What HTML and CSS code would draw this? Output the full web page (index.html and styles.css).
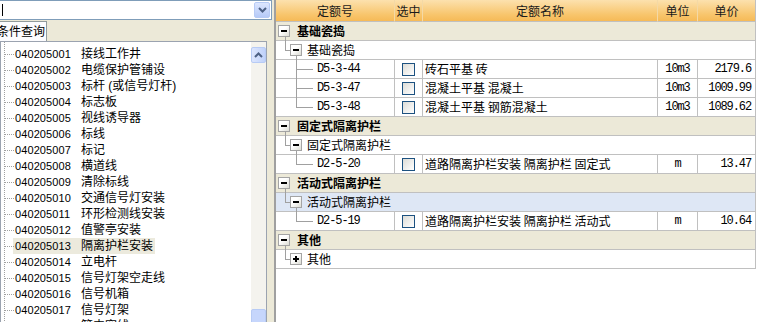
FILE: index.html
```html
<!DOCTYPE html>
<html lang="zh-CN">

<head>
    <meta charset="UTF-8">
    <title>定额查询</title>
    <link rel="stylesheet" href="styles.css">
</head>

<body>
    <div class="side">
        <div class="combo">
            <span class="caret"></span>
            <span class="combo-btn">
                <svg width="9" height="6" viewBox="0 0 9 6"><path d="M1 1 L4.5 4.5 L8 1" fill="none" stroke="#4D6185" stroke-width="2"/></svg>
            </span>
        </div>
        <div class="tabs">
            <div class="tab">条件查询</div>
        </div>
        <div class="tree">
            <div class="list">
                <div class="row"><span class="label"><span class="code">040205001</span>接线工作井</span></div>
                <div class="row"><span class="label"><span class="code">040205002</span>电缆保护管铺设</span></div>
                <div class="row"><span class="label"><span class="code">040205003</span>标杆 (或信号灯杆)</span></div>
                <div class="row"><span class="label"><span class="code">040205004</span>标志板</span></div>
                <div class="row"><span class="label"><span class="code">040205005</span>视线诱导器</span></div>
                <div class="row"><span class="label"><span class="code">040205006</span>标线</span></div>
                <div class="row"><span class="label"><span class="code">040205007</span>标记</span></div>
                <div class="row"><span class="label"><span class="code">040205008</span>横道线</span></div>
                <div class="row"><span class="label"><span class="code">040205009</span>清除标线</span></div>
                <div class="row"><span class="label"><span class="code">040205010</span>交通信号灯安装</span></div>
                <div class="row"><span class="label"><span class="code">040205011</span>环形检测线安装</span></div>
                <div class="row"><span class="label"><span class="code">040205012</span>值警亭安装</span></div>
                <div class="row on"><span class="label"><span class="code">040205013</span>隔离护栏安装</span></div>
                <div class="row"><span class="label"><span class="code">040205014</span>立电杆</span></div>
                <div class="row"><span class="label"><span class="code">040205015</span>信号灯架空走线</span></div>
                <div class="row"><span class="label"><span class="code">040205016</span>信号机箱</span></div>
                <div class="row"><span class="label"><span class="code">040205017</span>信号灯架</span></div>
                <div class="row"><span class="label"><span class="code">040205018</span>管内穿线</span></div>
            </div>
            <div class="scroll">
                <div class="scroll-btn">
                    <svg width="9" height="6" viewBox="0 0 9 6"><path d="M1 5 L4.5 1.5 L8 5" fill="none" stroke="#4D6185" stroke-width="2"/></svg>
                </div>
                <div class="thumb"></div>
            </div>
        </div>
    </div>

    <div class="main">
        <table class="grid">
            <colgroup>
                <col class="c-code">
                <col class="c-chk">
                <col class="c-name">
                <col class="c-unit">
                <col class="c-price">
            </colgroup>
            <thead>
                <tr>
                    <th>定额号</th>
                    <th>选中</th>
                    <th>定额名称</th>
                    <th>单位</th>
                    <th>单价</th>
                </tr>
            </thead>
            <tbody>
                <tr class="grp">
                    <td colspan="5"><div class="node lv0"><i class="box"></i>基础瓷捣</div></td>
                </tr>
                <tr>
                    <td colspan="5"><div class="node lv1"><i class="box"></i>基础瓷捣</div></td>
                </tr>
                <tr>
                    <td><div class="node lv2 mid"><span class="mono">D5-3-44</span></div></td>
                    <td><i class="chk"></i></td>
                    <td class="name">砖石平基 砖</td>
                    <td class="unit mono">10m3</td>
                    <td class="price mono">2179.6</td>
                </tr>
                <tr>
                    <td><div class="node lv2 mid"><span class="mono">D5-3-47</span></div></td>
                    <td><i class="chk"></i></td>
                    <td class="name">混凝土平基 混凝土</td>
                    <td class="unit mono">10m3</td>
                    <td class="price mono">1009.99</td>
                </tr>
                <tr>
                    <td><div class="node lv2"><span class="mono">D5-3-48</span></div></td>
                    <td><i class="chk"></i></td>
                    <td class="name">混凝土平基 钢筋混凝土</td>
                    <td class="unit mono">10m3</td>
                    <td class="price mono">1089.62</td>
                </tr>
                <tr class="grp">
                    <td colspan="5"><div class="node lv0"><i class="box"></i>固定式隔离护栏</div></td>
                </tr>
                <tr>
                    <td colspan="5"><div class="node lv1"><i class="box"></i>固定式隔离护栏</div></td>
                </tr>
                <tr>
                    <td><div class="node lv2"><span class="mono">D2-5-20</span></div></td>
                    <td><i class="chk"></i></td>
                    <td class="name">道路隔离护栏安装 隔离护栏 固定式</td>
                    <td class="unit mono">m</td>
                    <td class="price mono">13.47</td>
                </tr>
                <tr class="grp">
                    <td colspan="5"><div class="node lv0"><i class="box"></i>活动式隔离护栏</div></td>
                </tr>
                <tr class="sel">
                    <td colspan="5"><div class="node lv1"><i class="box"></i>活动式隔离护栏</div></td>
                </tr>
                <tr>
                    <td><div class="node lv2"><span class="mono">D2-5-19</span></div></td>
                    <td><i class="chk"></i></td>
                    <td class="name">道路隔离护栏安装 隔离护栏 活动式</td>
                    <td class="unit mono">m</td>
                    <td class="price mono">10.64</td>
                </tr>
                <tr class="grp">
                    <td colspan="5"><div class="node lv0"><i class="box"></i>其他</div></td>
                </tr>
                <tr>
                    <td colspan="5"><div class="node lv1"><i class="box plus"></i>其他</div></td>
                </tr>
            </tbody>
        </table>
    </div>
</body>

</html>
```

FILE: styles.css
```css
* {
    box-sizing: border-box;
}

body {
    margin: 0;
    width: 780px;
    height: 322px;
    overflow: hidden;
    display: flex;
    background: #ECE9D8;
    font-family: "Liberation Sans", "Noto Sans CJK SC", sans-serif;
    font-size: 12px;
    color: #000;
}

/* 左侧查询面板 */
.side {
    width: 274px;
    height: 340px;
    display: flex;
    flex-direction: column;
    background: #ECE9D8;
}

.combo {
    width: 274px;
    height: 20px;
    margin-left: -2px;
    padding: 0 1px 0 3px;
    background: #fff;
    border: 1px solid #7F9DB9;
    display: flex;
    align-items: center;
    justify-content: space-between;
}

.caret {
    width: 1px;
    height: 12px;
    background: #000;
}

.combo-btn {
    width: 16px;
    height: 16px;
    border: 1px solid #B7CBF5;
    border-radius: 2px;
    background: linear-gradient(#DCE6FE, #B6CAF7);
    display: flex;
    align-items: center;
    justify-content: center;
}

.tabs {
    height: 21px;
    padding-top: 1px;
    display: flex;
}

.tab {
    width: 55px;
    height: 20px;
    margin-left: -8px;
    padding-left: 4px;
    background: #FCFCFE;
    border: 1px solid #919B9C;
    border-bottom: none;
    line-height: 18px;
    font-family: "Noto Sans CJK SC", sans-serif;
}

.tree {
    flex: 1;
    width: 267px;
    background: #fff;
    border: 1px solid #9BA3B0;
    display: flex;
}

.list {
    flex: 1;
    padding-top: 4px;
    position: relative;
}

.list::before {
    content: "";
    position: absolute;
    left: 3px;
    top: 0;
    bottom: 0;
    border-left: 1px dotted #A0A0A0;
}

.row {
    height: 16px;
    padding-left: 12px;
    display: flex;
    align-items: center;
    position: relative;
}

.row::before {
    content: "";
    position: absolute;
    left: 4px;
    top: 8px;
    width: 9px;
    border-top: 1px dotted #A0A0A0;
}

.label {
    height: 16px;
    padding: 0 2px;
    display: flex;
    align-items: center;
    line-height: 16px;
    font-family: "Liberation Sans", "Noto Sans CJK SC", sans-serif;
}

.row.on .label {
    background: #ECEADD;
}

.code {
    width: 66px;
    font-size: 11px;
    letter-spacing: 0.1px;
}

.scroll {
    width: 15px;
    padding-top: 5px;
    background: #F4F3EE;
    display: flex;
    flex-direction: column;
}

.scroll-btn {
    height: 16px;
    border: 1px solid #B7CBF5;
    border-radius: 2px;
    background: linear-gradient(90deg, #DCE6FE, #C0D2FA);
    display: flex;
    align-items: center;
    justify-content: center;
}

.thumb {
    height: 30px;
    margin-top: auto;
    border: 1px solid #B7CBF5;
    border-radius: 2px;
    background: #C6D6FC;
}

/* 右侧定额表 */
.main {
    flex: 1;
    background: #fff;
    border-left: 2px solid #A0A0A0;
}

.grid {
    width: 480px;
    table-layout: fixed;
    border-collapse: separate;
    border-spacing: 0;
    font-family: "Noto Sans CJK SC", sans-serif;
    font-size: 12px;
}

.c-code { width: 119px; }
.c-chk { width: 28px; }
.c-name { width: 235px; }
.c-unit { width: 40px; }
.c-price { width: 58px; }

.grid th {
    height: 22px;
    padding: 0;
    font-weight: normal;
    color: #1A1A1A;
    background: linear-gradient(#FCE1AE, #F8C56C 70%, #F6BA57);
    border-right: 1px solid #F4D9A6;
    border-bottom: 1px solid #C0C0C0;
}

.grid th:last-child {
    border-right: 1px solid #C0C0C0;
}

.grid td {
    height: 19px;
    padding: 0;
    border-right: 1px solid #C0C0C0;
    border-bottom: 1px solid #C0C0C0;
    line-height: 18px;
    white-space: nowrap;
}

.grp td {
    background: #ECE9D8;
    font-weight: bold;
}

.sel td {
    background: #DEE7F5;
}

.name {
    padding-left: 2px !important;
}

.unit {
    text-align: center;
}

.price {
    text-align: right;
    padding-right: 4px !important;
}

.mono {
    font-family: "Liberation Mono", monospace;
    font-size: 12px;
    letter-spacing: -1.1px;
}

.node {
    height: 18px;
    display: flex;
    align-items: center;
    position: relative;
}

.lv0 {
    padding-left: 2px;
}

.lv1 {
    padding-left: 14px;
}

.lv2 {
    padding-left: 41px;
}

.box {
    width: 12px;
    height: 12px;
    margin-right: 7px;
    border: 1px solid #A4A4A4;
    background: linear-gradient(135deg, #fff 40%, #DCDCD4);
    position: relative;
}

.lv1 .box {
    margin-right: 5px;
}

.box::before {
    content: "";
    position: absolute;
    left: 2px;
    top: 4px;
    width: 6px;
    height: 2px;
    background: #000;
}

.box.plus::after {
    content: "";
    position: absolute;
    left: 4px;
    top: 2px;
    width: 2px;
    height: 6px;
    background: #000;
}

.lv1::before {
    content: "";
    position: absolute;
    left: 9px;
    top: -5px;
    width: 5px;
    height: 14px;
    border-left: 1px solid #A0A0A0;
    border-bottom: 1px solid #A0A0A0;
}

.lv2::before {
    content: "";
    position: absolute;
    left: 20px;
    top: -4px;
    width: 16px;
    height: 13px;
    border-left: 1px solid #A0A0A0;
    border-bottom: 1px solid #A0A0A0;
}

.lv2.mid::after {
    content: "";
    position: absolute;
    left: 20px;
    top: 9px;
    bottom: -1px;
    border-left: 1px solid #A0A0A0;
}

.chk {
    display: block;
    width: 13px;
    height: 13px;
    margin: 0 auto;
    border: 1px solid #1C5180;
    background: linear-gradient(135deg, #DCDCD7, #fff);
}
```
